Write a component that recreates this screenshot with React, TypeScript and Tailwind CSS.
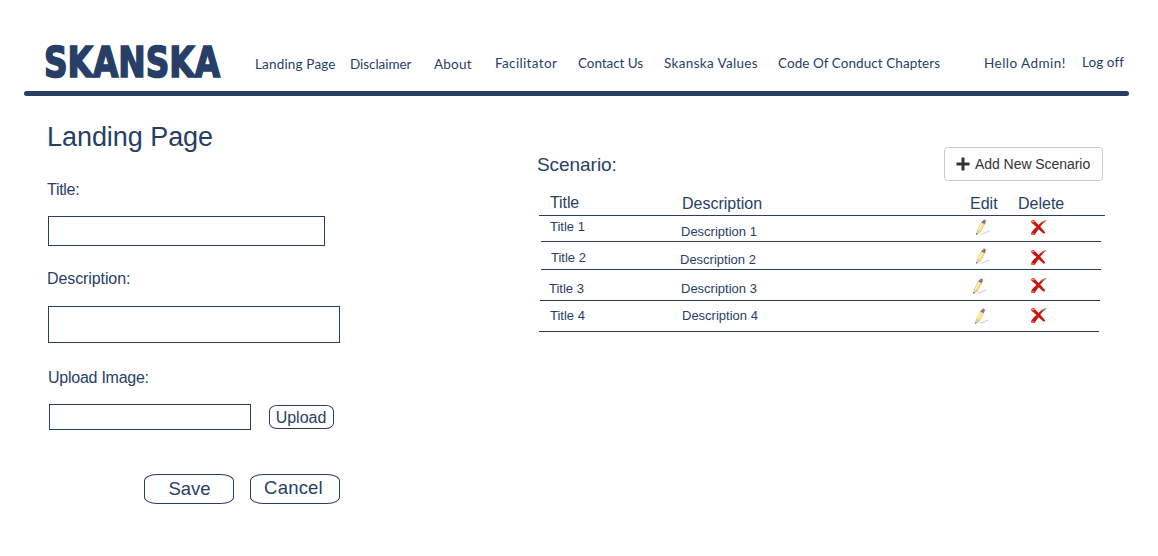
import React from "react";

const nav = [
  { label: "Landing Page", box: "w-[95px] pt-[55px] tracking-[0.17px]" },
  { label: "Disclaimer", box: "w-[84px] pt-[55px] tracking-[-0.06px]" },
  { label: "About", box: "w-[61px] pt-[55px] tracking-[0.22px]" },
  { label: "Facilitator", box: "w-[83px] pt-[54px] tracking-[0.35px]" },
  { label: "Contact Us", box: "w-[86px] pt-[54px] tracking-[-0.06px]" },
  { label: "Skanska Values", box: "w-[114px] pt-[54px] tracking-[0.34px]" },
  { label: "Code Of Conduct Chapters", box: "w-[206px] pt-[54px] tracking-[0.06px]" },
  { label: "Hello Admin!", box: "w-[98px] pt-[54px] tracking-[0.46px]" },
  { label: "Log off", box: "w-[60px] pt-[53px] tracking-[0.08px]" },
];

const rows = [
  {
    title: "Title 1",
    description: "Description 1",
    row: "ml-[2px] w-[560px] h-[26px]",
    titleBox: "ml-[9px] mt-[3px] w-[131px]",
    descBox: "mt-[8px] w-[294px]",
    edit: "mt-[3px]",
    remove: "ml-[39px] mt-[3px]",
  },
  {
    title: "Title 2",
    description: "Description 2",
    row: "ml-[2px] w-[560px] h-[28px]",
    titleBox: "ml-[10px] mt-[8px] w-[129px]",
    descBox: "mt-[10px] w-[295px]",
    edit: "mt-[6px]",
    remove: "ml-[39px] mt-[7px]",
  },
  {
    title: "Title 3",
    description: "Description 3",
    row: "ml-[1px] w-[560px] h-[31px]",
    titleBox: "ml-[9px] mt-[11px] w-[132px]",
    descBox: "mt-[11px] w-[291px]",
    edit: "mt-[8px]",
    remove: "ml-[42px] mt-[7px]",
  },
  {
    title: "Title 4",
    description: "Description 4",
    row: "ml-0 w-[560px] h-[31px]",
    titleBox: "ml-[11px] mt-[7px] w-[132px]",
    descBox: "mt-[7px] w-[292px]",
    edit: "mt-[7px]",
    remove: "ml-[40px] mt-[6px]",
  },
];

function Pencil() {
  return (
    <svg width="16" height="17" viewBox="0 0 16 17" className="block">
      <path d="M3 15.8 L13.5 11.5 L15 12.5 L8 15.5 Z" fill="#dcdcde" />
      <path d="M1.4 15.6 L2.2 11.4 L5.4 12.9 Z" fill="#f0dfc6" stroke="#b5a68c" strokeWidth="0.5" />
      <path d="M1.3 15.8 L1.7 14 L2.9 14.6 Z" fill="#333" />
      <path d="M2.2 11.4 L6.4 3.4 L9.8 5 L5.4 12.9 Z" fill="#f8e47c" stroke="#c4b070" strokeWidth="0.5" />
      <path d="M3.4 11.4 L7.3 4.4" stroke="#fffbd8" strokeWidth="1" />
      <path d="M6.4 3.4 L7.1 2 L10.6 3.5 L9.8 5 Z" fill="#4f7d78" />
      <path d="M7.6 2.2 Q8.4 0.2 10 0.7 Q11.6 1.6 10.6 3.5 Z" fill="#d9505c" />
    </svg>
  );
}

function Cross() {
  return (
    <svg width="17" height="17" viewBox="0 0 17 17" className="block">
      <path
        d="M0.8 3 Q1.2 0.9 4 1.1 Q6.4 3.9 8.6 6 Q11.4 2.2 16.3 1 Q16.5 1.7 15.4 2.2 Q12.4 4.5 10.3 7.7 Q12.6 10.2 15.1 13.3 Q15 14.8 13.4 14.4 Q10.6 12.2 8.7 10.2 Q6.4 12.8 4.9 15.8 Q2.4 16.6 1 15.2 Q1.4 12.8 3.4 10.8 Q4.6 9.4 6.5 7.9 Q3.2 5.4 0.8 3 Z"
        fill="#c8150e"
      />
      <path d="M1.9 3 Q2.6 1.8 4 2.6" stroke="#ee918a" strokeWidth="1.4" fill="none" strokeLinecap="round" />
      <path d="M2 14.9 L3.8 15" stroke="#e8837b" strokeWidth="1.4" strokeLinecap="round" />
      <path d="M12.8 3.4 L15.6 1.7" stroke="#dd7a73" strokeWidth="0.9" strokeLinecap="round" />
    </svg>
  );
}

export default function App() {
  return (
    <div className="h-[556px] w-[1158px] overflow-hidden bg-white font-['Liberation_Sans',sans-serif] text-[#273f66]">
      <header className="flex h-[91px] items-start">
        <div className="w-[255px] shrink-0 pt-[41px] pl-[44px]">
          <div className="h-[44px] w-[211px] origin-left scale-x-[0.78] font-['DejaVu_Sans',sans-serif] text-[42px] leading-[44px] font-bold [-webkit-text-stroke:1.7px_#273f66]">
            SKANSKA
          </div>
        </div>
        <nav className="flex items-start font-['Lato',sans-serif] text-[13.5px] leading-[18px] whitespace-nowrap">
          {nav.map((item) => (
            <a key={item.label} className={"shrink-0 " + item.box}>
              {item.label}
            </a>
          ))}
        </nav>
      </header>
      <div className="ml-[24px] h-[5px] w-[1105px] rounded-full bg-[#273f66]" />

      <main className="flex items-start">
        <form className="w-[539px] shrink-0 pl-[47px] whitespace-nowrap">
          <h1 className="mt-[25px] h-[32px] text-[27px] leading-[32px] tracking-[-0.05px]">Landing Page</h1>
          <label className="mt-[27px] block h-[20px] text-[16px] leading-[20px] tracking-[-0.3px]">Title:</label>
          <div className="mt-[16px] ml-px h-[30px] w-[277px] border border-[#273f66]" />
          <label className="mt-[23px] block h-[20px] text-[16px] leading-[20px] tracking-[-0.1px]">Description:</label>
          <div className="mt-[17px] ml-px h-[37px] w-[292px] border border-[#273f66]" />
          <label className="mt-[25px] ml-px block h-[20px] text-[16px] leading-[20px] tracking-[-0.25px]">Upload Image:</label>
          <div className="mt-[16px] ml-[2px] flex items-start">
            <div className="h-[26px] w-[202px] border border-[#273f66]" />
            <button type="button" className="mt-px ml-[18px] h-[24px] w-[65px] rounded-[8px/6px] border border-[#273f66] pr-px text-[16px] leading-[24px]">
              <span className="block h-[22px]">Upload</span>
            </button>
          </div>
          <div className="mt-[44px] ml-[97px] flex gap-[16px]">
            <button type="button" className="h-[30px] w-[90px] rounded-[13px/7px] border border-[#273f66] pl-px text-[18.5px] leading-[28px]">
              Save
            </button>
            <button type="button" className="h-[30px] w-[90px] rounded-[13px/7px] border border-[#273f66] pr-[3px] text-[18.5px] leading-[26px] tracking-[0.2px]">
              <span className="block h-[28px]">Cancel</span>
            </button>
          </div>
        </form>

        <section className="w-[566px] shrink-0 whitespace-nowrap">
          <div className="mt-[51px] flex items-start justify-between">
            <h2 className="-ml-[2px] mt-[6px] text-[19px] leading-[24px] tracking-[-0.05px]">Scenario:</h2>
            <button type="button" className="mr-[2px] flex h-[34px] w-[159px] items-center rounded-[4px] border border-[#ccc] pl-[11px] text-[14px] leading-[20px] tracking-[-0.05px] text-[#333]">
              <svg width="14" height="14" viewBox="0 0 14 14" className="mr-[5px] block">
                <path d="M5.5 0.5h3v5h5v3h-5v5h-3v-5h-5v-3h5z" fill="#333" />
              </svg>
              Add New Scenario
            </button>
          </div>
          <div className="flex h-[35px] items-start border-b border-[#273f66] text-[16px] leading-[20px]">
            <span className="mt-[12px] ml-[11px] w-[132px] tracking-[-0.1px]">Title</span>
            <span className="mt-[13px] w-[288px]">Description</span>
            <span className="mt-[13px] w-[48px]">Edit</span>
            <span className="mt-[13px]">Delete</span>
          </div>
          {rows.map((r) => (
            <div key={r.title} className={"flex items-start border-b border-[#273f66] text-[13px] leading-[16px] " + r.row}>
              <span className={"shrink-0 " + r.titleBox}>{r.title}</span>
              <span className={"shrink-0 " + r.descBox}>{r.description}</span>
              <span className={"shrink-0 " + r.edit}>
                <Pencil />
              </span>
              <span className={"shrink-0 " + r.remove}>
                <Cross />
              </span>
            </div>
          ))}
        </section>
      </main>
    </div>
  );
}
